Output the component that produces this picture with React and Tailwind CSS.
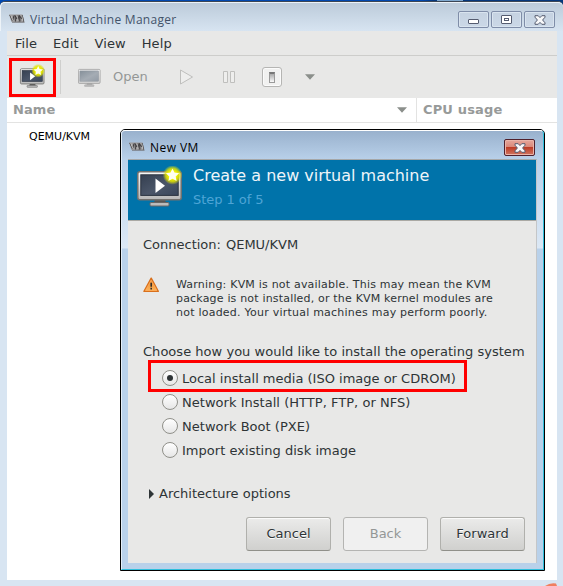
import React from "react";

function VmLogo() {
  return (
    <svg width="16" height="9" viewBox="0 0 16 9" className="mt-[3px] shrink-0">
      <path d="M0 .5h13.5L15.5 8H2.5z" fill="#9c9a9b" />
      <path d="M.8 1l2.7 6L5 1.5M6.5 7.5L6 1.5l2 3.6 1-3.6 1.2 6M11 7.5l-.5-6 2 3.5.8-3.5 1.2 6" fill="none" stroke="#3d3b3e" strokeWidth="1" />
      <path d="M1.6 1.2l2.6 6M8.2 1.6l1 5.4M12.8 1.6l1 5.4" stroke="#dcdcdc" strokeWidth=".7" />
      <path d="M3 8.3h12.5" stroke="#6f6d70" strokeWidth=".8" />
    </svg>
  );
}

function Star({ x, y, s, id }) {
  return (
    <g transform={`translate(${x} ${y}) scale(${s})`}>
      <defs>
        <radialGradient id={id}>
          <stop offset="0.45" stopColor="#f0f100" />
          <stop offset="0.7" stopColor="#e2e400" stopOpacity="0.8" />
          <stop offset="1" stopColor="#d8dc20" stopOpacity="0" />
        </radialGradient>
      </defs>
      <circle r="9.8" fill={`url(#${id})`} />
      <path d="M0-6.6L2-2.4 6.6-1.8 3.2 1.4 4.1 6 0 3.8-4.1 6-3.2 1.4-6.6-1.8-2-2.4z" fill="#fffff0" />
    </g>
  );
}

function Monitor({ className, id, star, faded, starX = 35.5, starY = 9, starScale = 1 }) {
  return (
    <svg viewBox="0 0 46 42" className={className}>
      <defs>
        <linearGradient id={id + "s"} x1="0" y1="0" x2="1" y2="1">
          <stop offset="0" stopColor={faded ? "#85909a" : "#353f50"} />
          <stop offset="0.55" stopColor={faded ? "#a5acb4" : "#4b5669"} />
          <stop offset="1" stopColor={faded ? "#929ba5" : "#39465b"} />
        </linearGradient>
        <linearGradient id={id + "b"} x1="0" y1="0" x2="0" y2="1">
          <stop offset="0" stopColor="#fafafa" />
          <stop offset="1" stopColor={faded ? "#d2d2d2" : "#b8b8b8"} />
        </linearGradient>
      </defs>
      <path d="M18 33h10l1 4H17z" fill={faded ? "#aaa" : "#555"} />
      <rect x="13" y="36.5" width="19" height="3.5" rx="1" fill="#bbb" stroke={faded ? "#aaa" : "#666"} />
      <rect x="0.8" y="5.8" width="43.4" height="28" rx="2" fill={`url(#${id}b)`} stroke={faded ? "#999" : "#73716e"} strokeWidth="1.5" />
      <rect x="3.8" y="8.8" width="37.4" height="20.6" fill={`url(#${id}s)`} stroke={faded ? "#8b9299" : "#2c3441"} />
      {star && <path d="M18.5 12.5v14.5l9.5-7.2z" fill="white" />}
      {star && <Star x={starX} y={starY} s={starScale} id={id + "g"} />}
    </svg>
  );
}

function TitleButton({ children }) {
  return (
    <div className="flex h-[17px] w-[31px] items-center justify-center rounded-[2px] border border-[#7f8da8] bg-linear-to-b from-[#c5d2e1] to-[#cbd8e7] shadow-[inset_0_0_0_1px_#d9e4ef]">
      {children}
    </div>
  );
}

function CloseGlyph() {
  return (
    <svg width="12" height="10" viewBox="0 0 12 10">
      <path d="M1 .7h3.2L6 2.6 7.8.7H11v1.5L8.6 5 11 7.8v1.5H7.8L6 7.4 4.2 9.3H1V7.8L3.4 5 1 2.2z" fill="#f8f8f9" stroke="#555c70" />
    </svg>
  );
}

function Caret() {
  return (
    <svg width="10" height="6" viewBox="0 0 10 6">
      <path d="M0 .3h10L5 5.7z" fill="#8b8f8b" />
    </svg>
  );
}

function Radio({ label, checked }) {
  return (
    <div className="flex h-6 items-center gap-1">
      <span className="mb-[2px] flex size-4 items-center justify-center rounded-full border border-[#90908a] bg-linear-to-b from-white to-[#e6e6e6]">
        {checked && <span className="size-1.5 rounded-full bg-[#2e3436]" />}
      </span>
      <span>{label}</span>
    </div>
  );
}

function Button({ children, disabled }) {
  return (
    <div
      className={
        "flex h-[34px] w-[85px] items-center justify-center rounded-[3px] border " +
        (disabled
          ? "border-[#b4b4b2] bg-[#f0f0f0] text-[#949796]"
          : "border-[#b0b0ac] border-b-[#90908a] bg-linear-to-b from-[#ebebea] to-[#d0d0ce] shadow-[inset_0_1px_0_#fafafa] [text-shadow:0_1px_0_#fff]")
      }
    >
      {children}
    </div>
  );
}

function Dialog() {
  return (
    <div className="absolute top-[129px] left-[120px] flex h-[442px] w-[425px] flex-col rounded-t-[5px] border border-black bg-[#b9d1ea]">
      <div className="flex grow flex-col rounded-t-[4px] border border-t-white border-r-[#2fbfdc] border-b-[#2fbfdc] border-l-[#e4eef8] bg-[linear-gradient(#99b1cd_0,#b9d1ea_29px,#dce8f5_117px,#b9d1ea_118px)] px-1.5 pb-1.5">
        <div className="flex h-7 items-center pl-px">
          <VmLogo />
          <span className="ml-[5px] grow pt-[5px] font-['Open_Sans',sans-serif] text-[12px] tracking-[0.45px] text-black">New VM</span>
          <div className="mt-[5px] mr-[2px] flex h-[17px] w-[31px] items-center justify-center rounded-[2px] border border-[#50202c] bg-[linear-gradient(#e6a79c_0,#d98778_48%,#bd3d27_50%,#cf7560_100%)] shadow-[inset_0_0_0_1px_#eab4a9]">
            <CloseGlyph />
          </div>
        </div>
        <div className="flex grow flex-col border-t border-r border-[#a5a7a8] border-r-[#c4c6c8] bg-[#e8e8e7]">
          <div className="flex h-[61px] border-b border-[#aaa9a4] bg-[#0073aa]">
            <Monitor id="large" star className="mt-[6px] ml-[9px] h-[42px] w-[46px]" />
            <div className="ml-[10px] pt-[5px]">
              <div className="h-[22px] text-[16px] leading-[21px] text-[#eef5f9]">Create a new virtual machine</div>
              <div className="mt-[3px] h-[20px] leading-[20px] tracking-[-0.05px] text-[#4ea5d6]">Step 1 of 5</div>
            </div>
          </div>
          <div className="flex flex-col pl-[15px]">
            <div className="mt-[14px] flex h-5 items-center gap-[5px]">
              <span>Connection:</span>
              <span>QEMU/KVM</span>
            </div>
            <div className="mt-[22px] flex h-[43px]">
              <svg width="17" height="16" viewBox="0 0 17 16" className="shrink-0">
                <defs>
                  <linearGradient id="warn" x1="0" y1="0" x2="0" y2="1">
                    <stop offset="0" stopColor="#ee8125" />
                    <stop offset="1" stopColor="#fcb85f" />
                  </linearGradient>
                </defs>
                <path d="M8.2 1.2L15.3 14.4H1z" fill="url(#warn)" stroke="#d9701c" strokeWidth="1.4" strokeLinejoin="round" />
                <path d="M8.2 3.2L13.8 13.4H2.6z" fill="none" stroke="#ffb060" strokeWidth=".7" />
                <path d="M8.2 5.8v4M8.2 10.8v1.6" stroke="#2b2b2b" strokeWidth="1.5" />
              </svg>
              <div className="ml-4 pt-px text-[11px] leading-[14px] tracking-[0.2px] whitespace-nowrap">
                <div>Warning: KVM is not available. This may mean the KVM</div>
                <div className="tracking-[0.18px]">package is not installed, or the KVM kernel modules are</div>
                <div className="tracking-[0.23px]">not loaded. Your virtual machines may perform poorly.</div>
              </div>
            </div>
            <div className="mt-[22px] h-5 leading-5 tracking-[0.03px]">Choose how you would like to install the operating system</div>
            <div className="-mt-[2px] ml-[5px] flex h-8 w-[319px] items-center border-3 border-[#ff0000] pt-[6px] pl-[11px]">
              <Radio label="Local install media (ISO image or CDROM)" checked />
            </div>
            <div className="-mt-px ml-[19px] tracking-[0.03px]">
              <Radio label="Network Install (HTTP, FTP, or NFS)" />
              <Radio label="Network Boot (PXE)" />
              <Radio label="Import existing disk image" />
            </div>
            <div className="mt-[21px] ml-[6px] flex h-5 items-center gap-[5px]">
              <svg width="5" height="10" viewBox="0 0 5 10">
                <path d="M0 0l5 5-5 5z" fill="#2e3436" />
              </svg>
              <span>Architecture options</span>
            </div>
          </div>
          <div className="mt-[13px] mr-[11px] flex justify-end gap-3">
            <Button>Cancel</Button>
            <Button disabled>Back</Button>
            <Button>Forward</Button>
          </div>
        </div>
      </div>
    </div>
  );
}

export default function App() {
  return (
    <div className="relative h-[586px] w-[563px] overflow-hidden bg-[linear-gradient(90deg,#0048b0_0,#0048b0_75%,#04377c_77%)] font-['DejaVu_Sans',sans-serif] text-[13px] whitespace-nowrap text-[#2e3436]">
      <div className="ml-[437px] h-px w-[26px] bg-[#7fa9cf]" />
      <div className="flex h-[585px] flex-col rounded-t-[5px] border-t border-[#3c4654] bg-[#d8e5f2]">
        <div className="flex h-[29px] shrink-0 items-center rounded-t-[5px] border-t border-l border-[#edf3f8] bg-linear-to-b from-[#bccbda] to-[#d7e4f1] pr-[8px] pl-2">
          <VmLogo />
          <span className="ml-[5px] grow pt-[6px] font-['Open_Sans',sans-serif] text-[12px] tracking-[0.28px] text-[#43536a]">Virtual Machine Manager</span>
          <div className="flex gap-[2px] pt-[5px]">
            <TitleButton>
              <span className="mt-1 h-[5px] w-[11px] rounded-[1px] border border-[#555c70] bg-white" />
            </TitleButton>
            <TitleButton>
              <span className="flex h-[9px] w-[11px] items-center justify-center rounded-[1px] border border-[#555c70] bg-white">
                <span className="h-[3px] w-[5px] border border-[#555c70] bg-white" />
              </span>
            </TitleButton>
            <TitleButton>
              <CloseGlyph />
            </TitleButton>
          </div>
        </div>
        <div className="mr-[6px] ml-[7px] flex h-[550px] flex-col bg-white">
          <div className="flex h-[25px] shrink-0 items-center gap-4 border-b border-[#cdcdcb] bg-[#e8e8e7] pt-[2px] pl-2 tracking-[0.08px]">
            <span>File</span>
            <span>Edit</span>
            <span>View</span>
            <span>Help</span>
          </div>
          <div className="flex h-[42px] shrink-0 items-center bg-[#e8e8e7] pl-[2px] text-[#949796]">
            <div className="flex h-[39px] w-[47px] items-center justify-center border-3 border-[#ff0000]">
              <Monitor id="small" star starX={33.5} starY={9.5} starScale={1.3} className="h-[24px] w-[25px] overflow-visible" />
            </div>
            <div className="ml-1 h-[34px] w-px bg-[#cfcfcd]" />
            <Monitor id="open" faded className="ml-[17px] h-[22px] w-[23px]" />
            <span className="ml-[12px]">Open</span>
            <svg width="15" height="16" viewBox="0 0 15 16" className="ml-[31px]">
              <path d="M1.5 1v14L13.5 8z" fill="#eeeeed" stroke="#bfbfbd" />
            </svg>
            <svg width="14" height="14" viewBox="0 0 14 14" className="ml-[28px]">
              <path d="M1.5 1.5h4v11h-4zM8.5 1.5h4v11h-4z" fill="#eeeeed" stroke="#bfbfbd" />
            </svg>
            <div className="ml-[26px] flex size-5 items-center justify-center rounded-[3px] border border-[#b5b5b3] bg-[#f1f1f0] shadow-[inset_0_0_0_1px_#fbfbfb]">
              <div className="h-[11px] w-[6px] border border-[#9a9a9a] border-t-2 border-t-[#777] bg-linear-to-b from-[#aaa] to-[#fafafa]" />
            </div>
            <div className="ml-[23px]">
              <Caret />
            </div>
          </div>
          <div className="flex h-[25px] shrink-0 border-b border-[#e3e3e2] text-[13px] leading-[23px] font-bold text-[#979a99]">
            <div className="flex w-[410px] items-center justify-between border-r border-[#e3e3e2] pr-[9px] pl-[6px]">
              <span className="-mt-[2px] tracking-[0.1px]">Name</span>
              <Caret />
            </div>
            <span className="pl-[6px] tracking-[0.15px]">CPU usage</span>
          </div>
          <div className="mt-[7px] ml-[22px] text-[11px] leading-[14px] text-black">QEMU/KVM</div>
        </div>
        <svg width="14" height="4" viewBox="0 0 14 4" className="mt-[2px] ml-[544px] shrink-0">
          <path d="M1 4Q6 .5 12 1.5L13 4z" fill="#f08060" />
        </svg>
      </div>
      <Dialog />
    </div>
  );
}
